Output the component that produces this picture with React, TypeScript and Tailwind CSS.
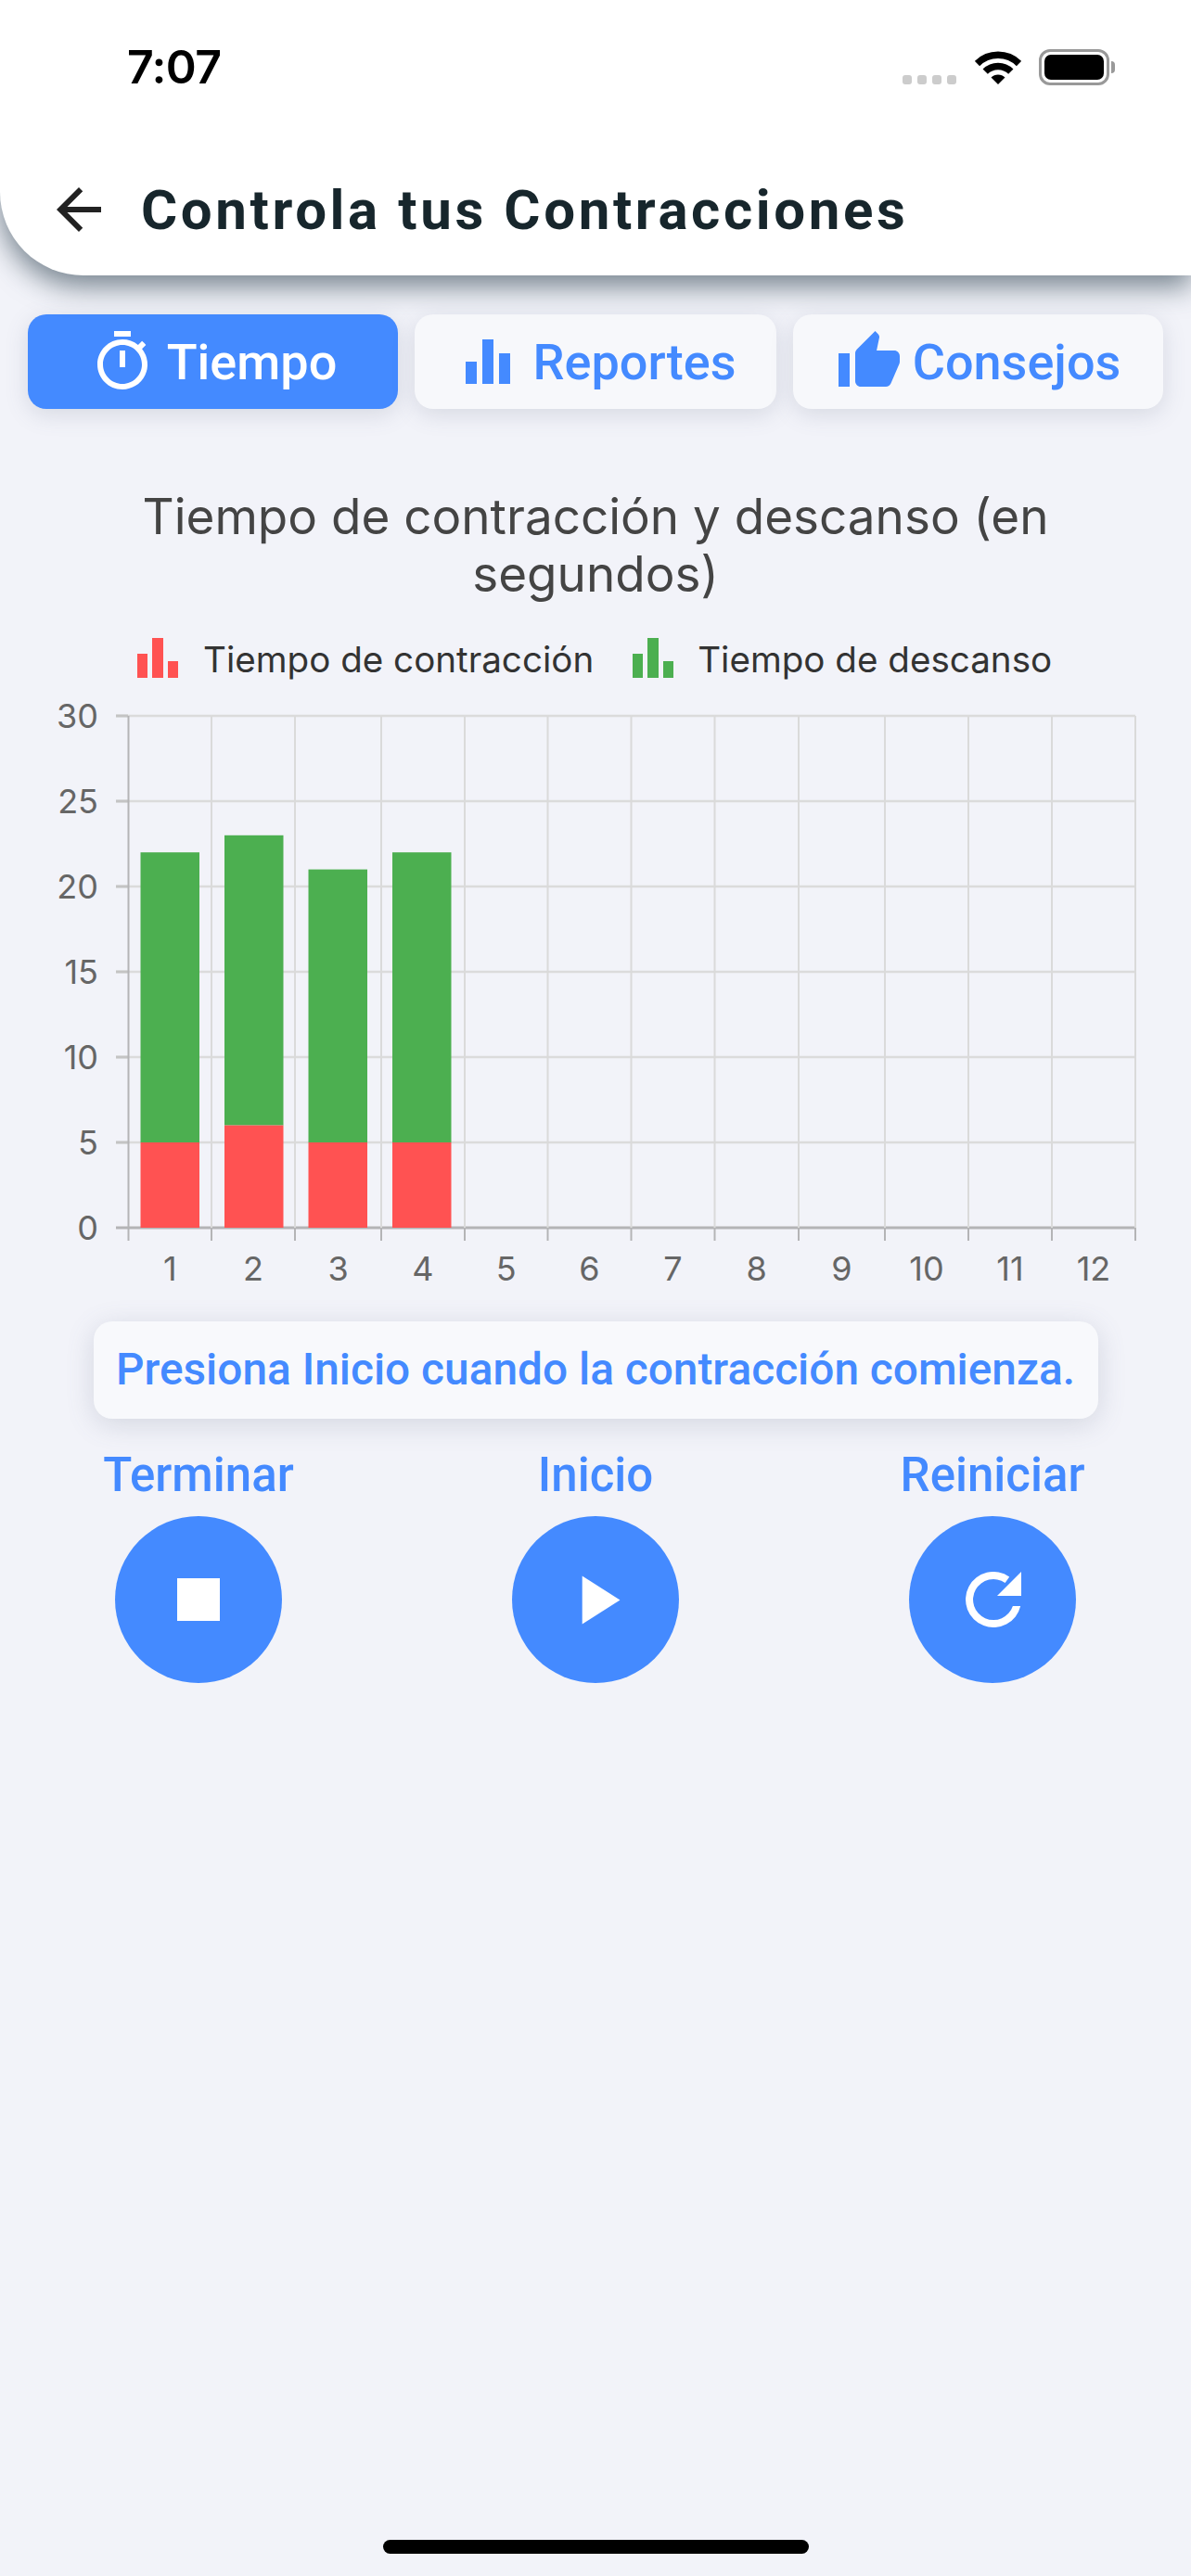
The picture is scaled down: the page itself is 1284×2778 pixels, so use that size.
import { MdArrowBack, MdEqualizer, MdOutlineTimer, MdThumbUp, MdStop, MdPlayArrow } from 'react-icons/md';

const yTicks = [0, 5, 10, 15, 20, 25, 30];
const gridX = [138.5, 228, 318, 411, 501, 590.5, 680.5, 770.5, 861, 954, 1044, 1134, 1224];
const bars = [
  { x: 151.5, rest: 22, work: 5 },
  { x: 242, rest: 23, work: 6 },
  { x: 332.5, rest: 21, work: 5 },
  { x: 423, rest: 22, work: 5 },
];

// y position inside the svg
const toY = (v: number) => 592 - v * 18.4;

function Chart() {
  return (
    <svg width="1284" height="668" viewBox="0 0 1284 668" className="block">
      {yTicks.map((v) => (
        <g key={v}>
          <line x1="125" x2="1224" y1={toY(v)} y2={toY(v)} stroke={v === 0 ? '#b4b4b6' : '#dbdbdb'} strokeWidth={v === 0 ? 3 : 2.5} />
          <text x="106" y={toY(v) + 13} textAnchor="end" fontSize="36" fill="#666" fontFamily="Inter, sans-serif">
            {v}
          </text>
        </g>
      ))}
      {[30, 25, 20, 15, 10, 5].map((v) => (
        <line key={v} x1="125" x2="138" y1={toY(v)} y2={toY(v)} stroke="#c4c4c4" strokeWidth="3" />
      ))}
      {gridX.map((x, i) => (
        <g key={x}>
          <line x1={x} x2={x} y1={toY(30)} y2={toY(0)} stroke={i === 0 ? '#b4b4b6' : '#dadada'} strokeWidth="2" />
          <line x1={x} x2={x} y1={toY(0)} y2={toY(0) + 14} stroke="#b4b4b6" strokeWidth="2" />
        </g>
      ))}
      {bars.map((b) => (
        <g key={b.x}>
          <rect x={b.x} y={toY(b.rest)} width="63.5" height={(b.rest - b.work) * 18.4} fill="#4caf50" />
          <rect x={b.x} y={toY(b.work)} width="63.5" height={b.work * 18.4} fill="#ff5252" />
        </g>
      ))}
      {gridX.slice(0, 12).map((x, i) => (
        <text key={x} x={(x + gridX[i + 1]) / 2} y="649" textAnchor="middle" fontSize="36" fill="#666" fontFamily="Inter, sans-serif">
          {i + 1}
        </text>
      ))}
    </svg>
  );
}

function LegendIcon({ color }: { color: string }) {
  return (
    <svg width="44" height="43" viewBox="0 0 44 43" fill={color} className="block">
      <rect x="0" y="17" width="11" height="26" />
      <rect x="16" y="0" width="12" height="43" />
      <rect x="33" y="25" width="11" height="18" />
    </svg>
  );
}

function RedoIcon() {
  return (
    <svg width="60" height="60" viewBox="0 0 60 60" fill="white" className="ml-[2px]">
      <path d="M59.2 37A30 30 0 1 1 47.2 5.4L42.6 12A22 22 0 1 0 50.9 37Z" />
      <path d="M60 0V26H34Z" />
    </svg>
  );
}

function StatusIcons() {
  return (
    <div className="flex items-end">
      <div className="flex gap-[6px] mb-[1px]">
        <div className="w-[10px] h-[10px] rounded-[3px] bg-[#cccccc]" />
        <div className="w-[10px] h-[10px] rounded-[3px] bg-[#cccccc]" />
        <div className="w-[10px] h-[10px] rounded-[3px] bg-[#cccccc]" />
        <div className="w-[10px] h-[10px] rounded-[3px] bg-[#cccccc]" />
      </div>
      <svg width="50" height="37" viewBox="0 0 50 37" className="ml-[20px] mb-[1px]" fill="none" stroke="black" strokeWidth="7.5">
        <path d="M2.5 14.5A32 32 0 0 1 47.5 14.5" />
        <path d="M11.2 23.2A19.5 19.5 0 0 1 38.8 23.2" />
        <path d="M25 37L17.5 29.5A10.6 10.6 0 0 1 32.5 29.5Z" fill="black" stroke="none" />
      </svg>
      <div className="ml-[19px] flex items-center">
        <div className="w-[76px] h-[39px] rounded-[12px] border-[3px] border-[#999999] p-[3px]">
          <div className="w-full h-full rounded-[7px] bg-black" />
        </div>
        <div className="w-[4px] h-[13px] ml-[2px] rounded-r-full bg-[#999999]" />
      </div>
    </div>
  );
}

export default function App() {
  return (
    <div className="relative flex flex-col w-[1284px] min-h-[2778px] bg-[#f2f3f9] font-['Roboto',sans-serif]">
      <header className="relative z-10 h-[297px] bg-white rounded-bl-[90px] shadow-[0_12px_30px_rgba(50,70,85,0.65)]">
        <div className="flex items-end justify-between h-[92px] pl-[137px] pr-[82px]">
          <span className="font-['Inter',sans-serif] font-semibold text-[50px] leading-[50px] tracking-[-0.6px] text-black mb-[-5px]">7:07</span>
          <StatusIcons />
        </div>
        <div className="flex items-center h-[72px] mt-[99px] pl-[49px]">
          <MdArrowBack size={72} color="#222222" className="-mt-[3px]" />
          <h1 className="ml-[31px] text-[60px] leading-[72px] font-bold tracking-[3.6px] text-[#17262c]">Controla tus Contracciones</h1>
        </div>
      </header>

      <div className="flex gap-[18px] mt-[42px] pl-[30px]">
        <button className="flex items-center justify-center gap-[12px] w-[399px] h-[102px] rounded-[20px] bg-[#448aff] text-white text-[54px] font-medium shadow-[0_6px_24px_rgba(90,100,130,0.18)]">
          <MdOutlineTimer size={72} />
          Tiempo
        </button>
        <button className="flex items-center justify-center gap-[12px] w-[390px] h-[102px] rounded-[20px] bg-[#f7f8fb] text-[#448aff] text-[54px] font-medium shadow-[0_6px_24px_rgba(90,100,130,0.18)]">
          <MdEqualizer size={72} />
          Reportes
        </button>
        <button className="flex items-center justify-center gap-[11px] w-[399px] h-[102px] rounded-[20px] bg-[#f7f8fb] text-[#448aff] text-[54px] font-medium shadow-[0_6px_24px_rgba(90,100,130,0.18)]">
          <MdThumbUp size={72} />
          Consejos
        </button>
      </div>

      <h2 className="mt-[85px] mx-auto w-[1040px] text-center font-['Inter',sans-serif] font-normal text-[53px] leading-[62px] text-[#444444]">
        Tiempo de contracción y descanso (en segundos)
      </h2>

      <div className="flex items-end mt-[38px] pl-[148px] font-['Inter',sans-serif] text-[38.6px] leading-[47px] text-[#333333]">
        <LegendIcon color="#ff5252" />
        <span className="ml-[27px] -mb-[4px]">Tiempo de contracción</span>
        <span className="ml-[42px]">
          <LegendIcon color="#4caf50" />
        </span>
        <span className="ml-[26px] -mb-[4px]">Tiempo de descanso</span>
      </div>

      <div className="mt-[1px]">
        <Chart />
      </div>

      <div className="flex items-center justify-center self-center mt-[25px] w-[1083px] h-[105px] rounded-[20px] bg-[#f8f9fc] text-[#448aff] text-[47.8px] font-medium shadow-[0_6px_30px_rgba(90,100,130,0.2)]">
        Presiona Inicio cuando la contracción comienza.
      </div>

      <div className="flex justify-between mt-[33px] px-[124px]">
        {[
          { label: 'Terminar', icon: <MdStop size={92} /> },
          { label: 'Inicio', icon: <MdPlayArrow size={89} /> },
          { label: 'Reiniciar', icon: <RedoIcon /> },
        ].map((a) => (
          <div key={a.label} className="relative flex flex-col items-center w-[180px]">
            <span className="text-[51px] leading-[56px] font-medium text-[#448aff] whitespace-nowrap">{a.label}</span>
            <div className="flex items-center justify-center w-[180px] h-[180px] mt-[16px] rounded-full bg-[#448aff] text-white">
              {a.icon}
            </div>
          </div>
        ))}
      </div>

      <div className="mt-auto mb-[24px] self-center w-[459px] h-[15px] rounded-full bg-black" />
    </div>
  );
}
